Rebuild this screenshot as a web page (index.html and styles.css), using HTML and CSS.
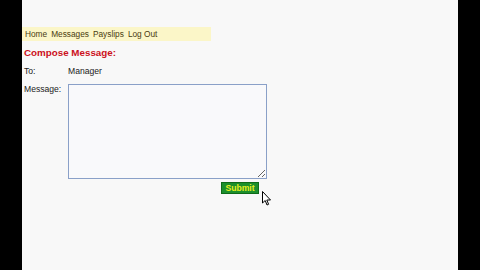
FILE: index.html
```html
<!DOCTYPE html>
<html>
<head>
<meta charset="utf-8">
<link rel="stylesheet" href="styles.css">
</head>
<body>
<div class="page">
  <nav class="nav">
    <a>Home</a><a>Messages</a><a>Payslips</a><a>Log Out</a>
  </nav>
  <h1 class="title">Compose Message:</h1>
  <div class="row to">
    <span class="label">To:</span>
    <span class="value">Manager</span>
  </div>
  <div class="row msg">
    <span class="label">Message:</span>
    <div class="field">
      <textarea class="box"></textarea>
      <div class="actions"><button class="submit">Submit</button></div>
    </div>
  </div>
  <svg class="cursor" width="10" height="16" viewBox="0 0 10 16">
    <path d="M0.5 0.5 L0.5 12 L3.2 9.5 L5 14 L6.6 13.3 L4.8 9 L8.5 9 Z" fill="#fff" stroke="#000" stroke-width="1"/>
  </svg>
</div>
</body>
</html>
```
FILE: styles.css
```css
html, body {
  margin: 0;
  padding: 0;
  background: #000;
  width: 480px;
  height: 270px;
  overflow: hidden;
}
.page {
  position: relative;
  margin: 0 22px;
  width: 436px;
  height: 270px;
  background: #f8f8f8;
  font-family: "Liberation Sans", Arial, sans-serif;
  font-size: 8.6px;
  color: #222;
  display: flex;
  flex-direction: column;
  padding-top: 27px;
  box-sizing: border-box;
}
.nav {
  width: 189px;
  height: 14px;
  background: #fbf6c8;
  display: flex;
  align-items: center;
  gap: 4px;
  padding-left: 3px;
  box-sizing: border-box;
  color: #4a3c10;
  font-size: 8.3px;
}
.title {
  margin: 6px 0 0 2px;
  font-size: 9.8px;
  font-weight: bold;
  color: #cc1020;
  line-height: 12px;
}
.row {
  display: flex;
  margin-left: 2px;
}
.label {
  width: 44px;
  flex: none;
}
.to {
  margin-top: 6px;
  line-height: 12px;
}
.msg {
  margin-top: 7px;
}
.msg .label {
  margin-top: 0;
}
.field {
  display: flex;
  flex-direction: column;
}
.box {
  width: 199px;
  height: 95px;
  box-sizing: border-box;
  border: 1px solid #8aa0c8;
  background: #f9f9fb;
  margin: 0;
  resize: both;
}
.actions {
  display: flex;
  justify-content: flex-end;
  padding-right: 8px;
  margin-top: 3px;
}
.submit {
  width: 38px;
  height: 12px;
  padding: 0;
  border: 1px solid #0e6a18;
  background: #1c8f2c;
  color: #e8f020;
  font-family: "Liberation Sans", Arial, sans-serif;
  font-weight: bold;
  font-size: 8.6px;
  line-height: 10px;
}
.cursor {
  position: absolute;
  left: 240px;
  top: 191px;
}
```
